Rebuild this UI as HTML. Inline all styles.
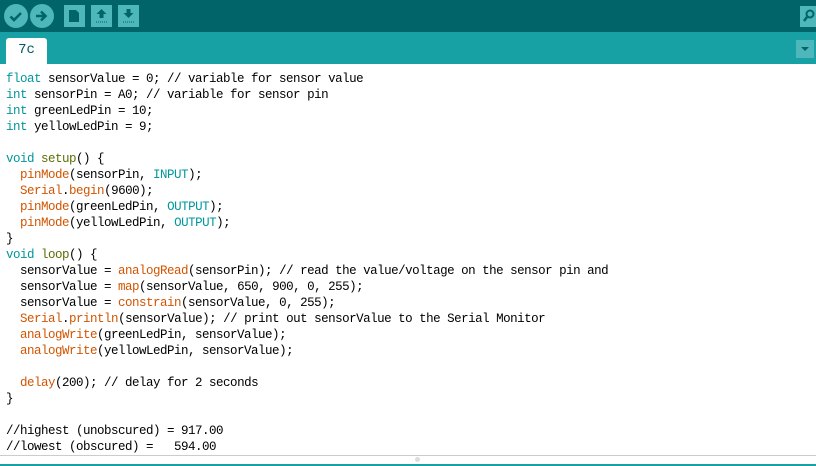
<!DOCTYPE html>
<html><head><style>
body{margin:0;width:816px;height:466px;overflow:hidden;background:#fff;position:relative;font-family:"Liberation Sans",sans-serif}
.tb{position:absolute;left:0;top:0;width:816px;height:32px;background:#006468}
.tabs{position:absolute;left:0;top:32px;width:816px;height:32px;background:#17a1a5}
.tab{position:absolute;left:6px;top:6px;width:41px;height:26px;background:#fff;border-radius:3px 3px 0 0;color:#005c5f;font-family:"Liberation Mono",monospace;font-size:14px;text-align:center;line-height:24px}
.ic{position:absolute}
pre{position:absolute;left:6px;top:71px;margin:0;font-family:"Liberation Mono",monospace;font-size:12.5px;letter-spacing:-0.5px;line-height:16px;color:#000}
.k{color:#00979c}.f{color:#d35400}.g{color:#5e6d03}
.bot{position:absolute;left:0;top:455px;width:816px;height:1px;background:#ccc}
.bot2{position:absolute;left:0;top:464px;width:816px;height:2px;background:#17a1a5}
</style></head><body>
<div class="tb"></div>
<svg class="ic" style="left:0;top:0" width="816" height="32">
<circle cx="16" cy="16" r="12" fill="#4db7bb"/>
<path d="M10.5 16.5l3.5 3.5 7-7" stroke="#006468" stroke-width="2.6" fill="none"/>
<circle cx="42" cy="16" r="12" fill="#4db7bb"/>
<path d="M36 16h9M41 11.5l4.5 4.5-4.5 4.5" stroke="#006468" stroke-width="2.6" fill="none"/>
<rect x="64" y="5" width="21" height="22" fill="#4db7bb"/>
<path d="M69 10h7l3 3v9h-10z" fill="#006468"/>
<rect x="91" y="5" width="21" height="22" fill="#4db7bb"/>
<path d="M101.5 9l-5 5h3v4h4v-4h3z" fill="#006468"/><path d="M96 22h11" stroke="#006468" stroke-dasharray="1 1"/>
<rect x="118" y="5" width="21" height="22" fill="#4db7bb"/>
<path d="M126.5 9v4h-3l5 5 5-5h-3v-4z" fill="#006468"/><path d="M123 22h11" stroke="#006468" stroke-dasharray="1 1"/>
<rect x="800" y="6" width="16" height="21" fill="#4db7bb"/>
<circle cx="810" cy="14" r="3.5" stroke="#006468" stroke-width="2" fill="none"/><path d="M807 17l-3 4" stroke="#006468" stroke-width="2.5"/>
</svg>
<div class="tabs"><div class="tab">7c</div>
<svg style="position:absolute;left:796px;top:8px" width="18" height="18"><rect width="18" height="18" fill="#4db7bb"/><path d="M5 7h8l-4 4z" fill="#006468"/></svg></div>
<pre><span class="k">float</span> sensorValue = 0; // variable for sensor value
<span class="k">int</span> sensorPin = A0; // variable for sensor pin
<span class="k">int</span> greenLedPin = 10;
<span class="k">int</span> yellowLedPin = 9;

<span class="k">void</span> <span class="g">setup</span>() {
  <span class="f">pinMode</span>(sensorPin, <span class="k">INPUT</span>);
  <span class="f">Serial</span>.<span class="f">begin</span>(9600);
  <span class="f">pinMode</span>(greenLedPin, <span class="k">OUTPUT</span>);
  <span class="f">pinMode</span>(yellowLedPin, <span class="k">OUTPUT</span>);
}
<span class="k">void</span> <span class="g">loop</span>() {
  sensorValue = <span class="f">analogRead</span>(sensorPin); // read the value/voltage on the sensor pin and
  sensorValue = <span class="f">map</span>(sensorValue, 650, 900, 0, 255);
  sensorValue = <span class="f">constrain</span>(sensorValue, 0, 255);
  <span class="f">Serial</span>.<span class="f">println</span>(sensorValue); // print out sensorValue to the Serial Monitor
  <span class="f">analogWrite</span>(greenLedPin, sensorValue);
  <span class="f">analogWrite</span>(yellowLedPin, sensorValue);

  <span class="f">delay</span>(200); // delay for 2 seconds
}

//highest (unobscured) = 917.00
//lowest (obscured) =   594.00</pre>
<div class="bot"></div>
<div style="position:absolute;left:415px;top:457px;width:5px;height:5px;border-radius:50%;background:#ddd"></div>
<div class="bot2"></div>
</body></html>
